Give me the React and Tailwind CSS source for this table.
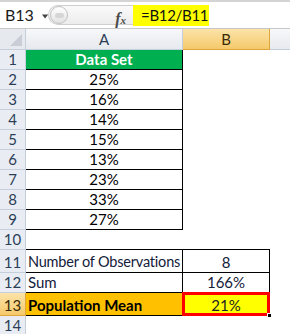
import React from "react";

const font = { fontFamily: "Lato, 'Liberation Sans', sans-serif" };

function RowHeader({ n, h, active }) {
  return (
    <div
      className={
        "w-[26px] shrink-0 flex items-end justify-center pb-[1px] border-r border-b text-[15px] leading-[18px] " +
        (active
          ? "bg-gradient-to-b from-[#fbe3a8] to-[#f5c96a] border-[#e1a63b] text-[#3a2a05]"
          : "bg-[#e9edf3] border-[#c5cfdb] text-[#2c3e57]")
      }
      style={{ height: h }}
    >
      {n}
    </div>
  );
}

function Row({ n, h = 20, active, a, b, aCls = "", bCls = "", overlay }) {
  return (
    <div className="flex">
      <RowHeader n={n} h={h} active={active} />
      <div
        className={"w-[157px] shrink-0 flex items-end pb-[1px] text-[15px] leading-[18px] whitespace-nowrap " + aCls}
        style={{ height: h }}
      >
        {a}
      </div>
      <div
        className={"relative w-[87px] shrink-0 flex items-end justify-center pb-[1px] text-[15px] leading-[18px] whitespace-nowrap " + bCls}
        style={{ height: h }}
      >
        {b}
        {overlay}
      </div>
      <div className="flex-1 bg-white" style={{ height: h }} />
    </div>
  );
}

export default function App() {
  const data = ["25%", "16%", "14%", "15%", "13%", "23%", "33%", "27%"];
  return (
    <div className="w-[290px] h-[334px] overflow-hidden bg-white text-black" style={font}>
      {/* formula bar */}
      <div className="h-[29px] border-t-2 border-[#d4d4d4] border-b border-b-[#c8c8c8] flex items-stretch bg-white">
        <div className="w-[48px] shrink-0 flex items-center pl-[5px] text-[16px] text-[#1b1b1b]">
          <span>B13</span>
          <svg width="8" height="5" viewBox="0 0 8 5" className="ml-[8px] mt-[2px]">
            <path d="M0 0 L8 0 L4 5 Z" fill="#444" />
          </svg>
        </div>
        <div className="w-[85px] shrink-0 flex items-center my-[3px] rounded-l-full border border-r-0 border-[#cfcfcf] bg-gradient-to-b from-[#fafafa] to-[#ececec] relative">
          <div className="ml-[1px] w-[18px] h-[18px] rounded-full border border-[#c2c2c2] bg-gradient-to-b from-[#ffffff] to-[#e2e2e2] flex items-center justify-center">
            <div className="w-[9px] h-[5px] rounded-full bg-[#d6d6d6]" />
          </div>
          <span
            className="absolute right-[7px] top-[1px] text-[16px] italic font-bold text-[#4a4a4a]"
            style={{ fontFamily: "'Liberation Serif', serif" }}
          >
            f<span className="text-[11px]">x</span>
          </span>
        </div>
        <div className="flex-1 flex items-center">
          <div className="w-[76px] h-[21px] bg-[#ffff00] flex items-center pl-[8px] text-[15px] tracking-[-0.3px] whitespace-nowrap text-[#111]">
            =B12/B11
          </div>
        </div>
      </div>

      {/* column headers */}
      <div className="flex h-[21px]">
        <div className="w-[26px] shrink-0 relative bg-[#e6e9ee] border-r border-b border-[#c5cfdb]">
          <svg width="12" height="12" viewBox="0 0 12 12" className="absolute right-[3px] bottom-[3px]">
            <path d="M12 0 L12 12 L0 12 Z" fill="#c9ced6" />
          </svg>
        </div>
        <div className="w-[157px] shrink-0 flex items-end justify-center pb-[1px] text-[15px] leading-[18px] text-[#2c3e57] bg-gradient-to-b from-[#f7f8fa] to-[#e6e9ee] border-r border-b border-[#c5cfdb]">
          A
        </div>
        <div className="w-[87px] shrink-0 flex items-end justify-center pb-[1px] text-[15px] leading-[18px] text-[#3a2a05] bg-gradient-to-b from-[#fbe3a8] to-[#f5c96a] border-r border-b border-[#e1a63b]">
          B
        </div>
        <div className="flex-1 bg-gradient-to-b from-[#f7f8fa] to-[#e6e9ee] border-b border-[#c5cfdb]" />
      </div>

      {/* rows */}
      <Row
        n={1}
        a={<span className="w-full text-center font-bold text-white">Data Set</span>}
        aCls="bg-[#00b050] border-r border-b border-black"
      />
      {data.map((v, i) => (
        <Row
          key={i}
          n={i + 2}
          a={<span className="w-full text-center">{v}</span>}
          aCls="bg-white border-r border-b border-black"
        />
      ))}
      <Row n={10} aCls="border-b border-black" bCls="border-b border-black" />
      <Row
        n={11}
        h={23}
        a={<span className="pl-[2px] text-[14.5px] tracking-[-0.2px] text-[#13203a]">Number of Observations</span>}
        b={<span className="text-[#13203a]">8</span>}
        aCls="border-r border-b border-black"
        bCls="border-r border-b border-black"
      />
      <Row
        n={12}
        a={<span className="pl-[2px] text-[#13203a]">Sum</span>}
        b={<span className="text-[#13203a]">166%</span>}
        aCls="border-r border-b border-black"
        bCls="border-r border-b border-black"
      />
      <Row
        n={13}
        h={23}
        active
        a={<span className="pl-[2px] font-bold">Population Mean</span>}
        b={<span className="relative z-10 text-[#222]">21%</span>}
        aCls="bg-[#ffc000] border-r border-b border-black"
        bCls="bg-[#ffff00] border-r border-b border-black"
        overlay={
          <>
            <div className="absolute left-[-1px] top-[-1px] right-[-1px] bottom-[-1px] border-[3px] border-[#ff0000]" />
            <div className="absolute right-[-3px] bottom-[-3px] w-[5px] h-[5px] bg-black border border-white" />
          </>
        }
      />
      <Row n={14} />
    </div>
  );
}
